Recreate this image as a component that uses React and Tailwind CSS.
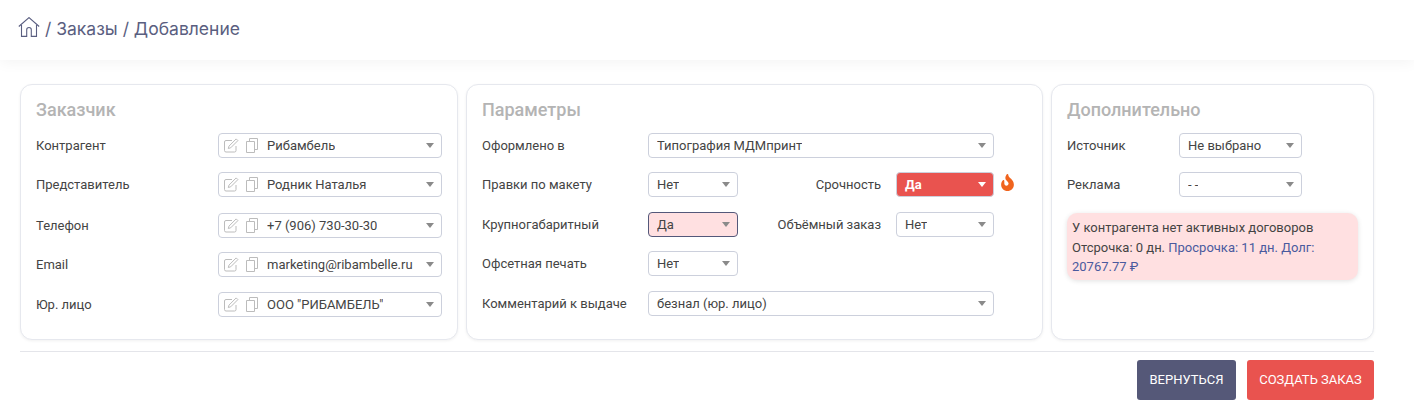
import { FaFire } from 'react-icons/fa';

const font = { roboto: 'font-["Roboto","Liberation_Sans",sans-serif]' };

function Arrow({ light }) {
  return (
    <svg width="8" height="5" viewBox="0 0 8 5" className="shrink-0 mr-[1px]">
      <path d="M0 0H8L4 5Z" fill={light ? '#ffffff' : '#8a8a8a'} />
    </svg>
  );
}

function EditIcon() {
  return (
    <svg width="15" height="15" viewBox="0 0 15 15" fill="none" stroke="#bcbcbc" strokeWidth="1" className="shrink-0">
      <path d="M12 8v4.5a1.5 1.5 0 0 1-1.5 1.5H2A1.5 1.5 0 0 1 .5 12.5V4A1.5 1.5 0 0 1 2 2.5h6" />
      <path d="M12.2 .9l1.7 1.7-7.2 7.2-2.4.7.7-2.4z" />
    </svg>
  );
}

function CopyIcon() {
  return (
    <svg width="12" height="15" viewBox="0 0 12 15" fill="none" stroke="#bcbcbc" strokeWidth="1" className="shrink-0">
      <path d="M.5 3.5h8v11h-8z" />
      <path d="M3.5 3.5V.5h8v11H8.5" />
    </svg>
  );
}

function HomeIcon() {
  return (
    <svg width="22" height="20" viewBox="0 0 22 20" fill="none" stroke="#5a5e80" strokeWidth="1.1" className="shrink-0 mb-[5px]">
      <path d="M.8 9.5 11 .6l10.2 8.9" />
      <path d="M3.5 8v11.4h5.2v-6.6a2.3 2.3 0 0 1 4.6 0v6.6h5.2V8" />
    </svg>
  );
}

function Select({ value, className = '', icons }) {
  return (
    <div className={`h-[25px] flex items-center justify-between border border-[#ccd0dc] rounded-[4px] bg-white text-[13px] text-[#444] pr-[6px] ${icons ? 'pl-[5px]' : 'pl-[8px]'} ${className}`}>
      <div className="flex items-center min-w-0">
        {icons ? (
          <div className="flex items-center gap-[7px] mr-[9px]">
            <EditIcon />
            <CopyIcon />
          </div>
        ) : null}
        <span className="truncate">{value}</span>
      </div>
      <Arrow />
    </div>
  );
}

function Label({ children, className = '' }) {
  return <div className={`text-[13px] text-[#444] ${className}`}>{children}</div>;
}

function Card({ title, className = '', children }) {
  return (
    <section className={`h-[256px] border border-[#e6e8ee] rounded-[12px] bg-white shadow-[0_1px_3px_rgba(0,0,0,0.06)] pl-[15px] pt-[14px] ${className}`}>
      <h2 className="text-[18px] leading-[22px] font-medium text-[#b4b4b4] mb-[12px]">{title}</h2>
      {children}
    </section>
  );
}

const customers = [
  ['Контрагент', 'Рибамбель', ''],
  ['Представитель', 'Родник Наталья', 'mt-[14px]'],
  ['Телефон', '+7 (906) 730-30-30', 'mt-[16px]'],
  ['Email', 'marketing@ribambelle.ru', 'mt-[14px]'],
  ['Юр. лицо', 'ООО "РИБАМБЕЛЬ"', 'mt-[15px]'],
];

export default function App() {
  return (
    <div className={`w-[1414px] h-[420px] bg-white overflow-hidden ${font.roboto}`}>
      <header className="h-[60px] bg-white shadow-[0_2px_14px_rgba(0,0,0,0.05)] flex items-center pl-[18px] pb-[2px]">
        <HomeIcon />
        <span className="ml-[5px] text-[17.5px] text-[#5a5e80] font-['Inter',sans-serif]">/ Заказы / Добавление</span>
      </header>

      <main className="pl-[20px] pt-[24px] w-[1374px]">
        <div className="flex gap-[8px]">
          <Card title="Заказчик" className="w-[438px]">
            {customers.map(([label, value, mt]) => (
              <div key={label} className={`flex items-center ${mt}`}>
                <Label className="w-[182px]">{label}</Label>
                <Select value={value} icons className="w-[224px]" />
              </div>
            ))}
          </Card>

          <Card title="Параметры" className="w-[577px]">
            <div className="flex items-center">
              <Label className="w-[166px]">Оформлено в</Label>
              <Select value="Типография МДМпринт" className="w-[346px]" />
            </div>
            <div className="flex items-center mt-[14px]">
              <Label className="w-[166px]">Правки по макету</Label>
              <Select value="Нет" className="w-[90px]" />
              <Label className="w-[143px] text-right">Срочность</Label>
              <div className="ml-[15px] w-[98px] h-[25px] flex items-center justify-between rounded-[4px] border border-[#ccd0dc] bg-[#e9534f] text-white text-[13px] font-bold pl-[8px] pr-[6px]">
                <span>Да</span>
                <Arrow light />
              </div>
              <FaFire className="ml-[5px] mb-[4px] text-[#f0641e] text-[17px]" />
            </div>
            <div className="flex items-center mt-[15px]">
              <Label className="w-[166px]">Крупногабаритный</Label>
              <Select value="Да" className="w-[90px] !bg-[#ffe0e1] !border-[#54587a]" />
              <Label className="w-[143px] text-right">Объёмный заказ</Label>
              <Select value="Нет" className="ml-[15px] w-[98px]" />
            </div>
            <div className="flex items-center mt-[14px]">
              <Label className="w-[166px]">Офсетная печать</Label>
              <Select value="Нет" className="w-[90px]" />
            </div>
            <div className="flex items-center mt-[15px]">
              <Label className="w-[166px]">Комментарий к выдаче</Label>
              <Select value="безнал (юр. лицо)" className="w-[346px]" />
            </div>
          </Card>

          <Card title="Дополнительно" className="w-[323px]">
            <div className="flex items-center">
              <Label className="w-[112px]">Источник</Label>
              <Select value="Не выбрано" className="w-[123px]" />
            </div>
            <div className="flex items-center mt-[14px]">
              <Label className="w-[112px]">Реклама</Label>
              <Select value="- -" className="w-[123px]" />
            </div>
            <div className="mt-[16px] w-[291px] h-[67px] bg-[#ffe0e1] rounded-[10px] shadow-[0_1px_5px_rgba(0,0,0,0.12)] px-[5px] pt-[5px] text-[13px] leading-[19.5px] text-[#444]">
              <div>У контрагента нет активных договоров</div>
              <div>
                <span>Отсрочка: 0 дн.</span>{' '}
                <span className="text-[#4a5a9e]">Просрочка: 11 дн. Долг:</span>{' '}
                <span className="text-[#4a5a9e]">20767.77 ₽</span>
              </div>
            </div>
          </Card>
        </div>

        <div className="mt-[11px] border-t border-[#e4e5ea] pt-[8px] flex justify-end gap-[11px]">
          <button type="button" className="w-[99px] h-[40px] rounded-[3px] bg-[#555878] text-white text-[13px]">ВЕРНУТЬСЯ</button>
          <button type="button" className="w-[127px] h-[40px] rounded-[3px] bg-[#e9534f] text-white text-[13px]">СОЗДАТЬ ЗАКАЗ</button>
        </div>
      </main>
    </div>
  );
}
